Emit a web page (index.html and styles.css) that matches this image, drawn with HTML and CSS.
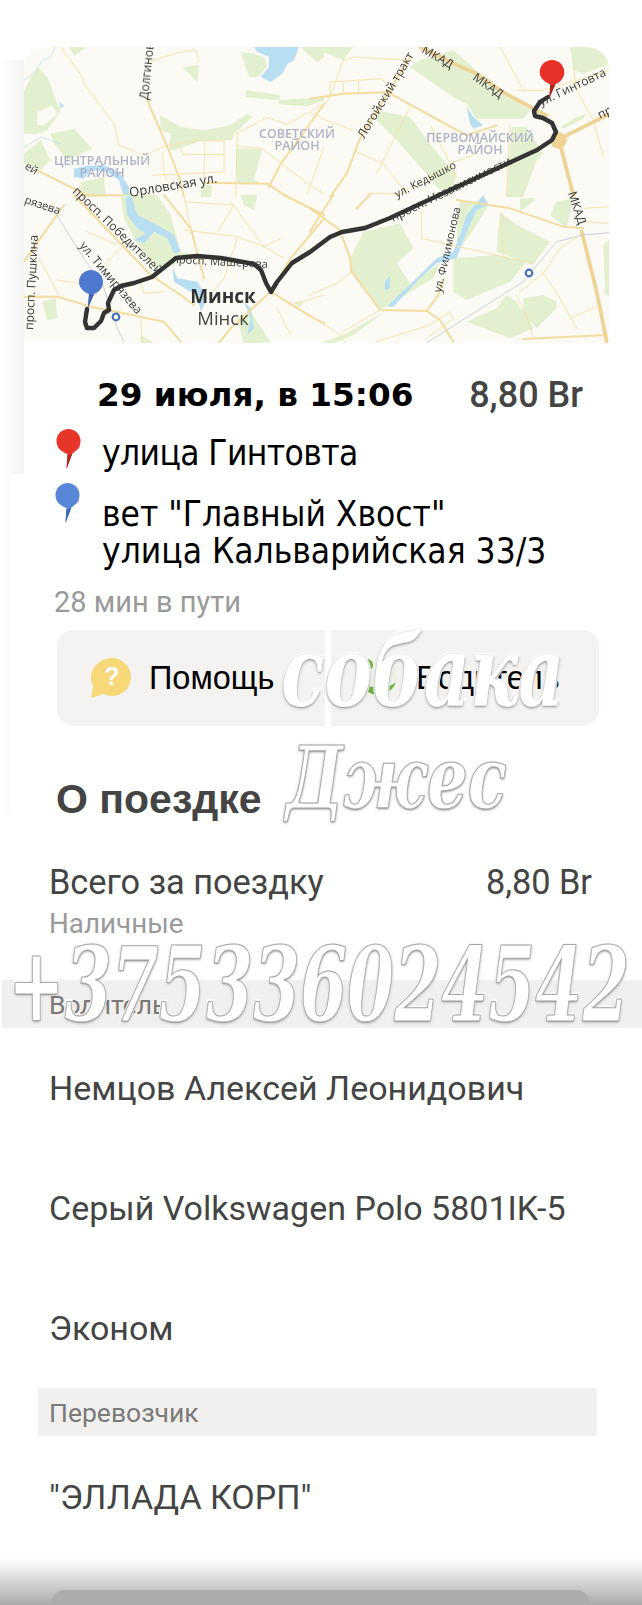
FILE: index.html
```html
<!DOCTYPE html>
<html lang="ru">
<head>
<meta charset="utf-8">
<title>О поездке</title>
<link rel="stylesheet" href="styles.css">
</head>
<body>
<div class="page">
  <section class="top">
    <svg class="map" viewBox="24 47 585 296" xmlns="http://www.w3.org/2000/svg">
      <defs><filter id="soft" x="-5%" y="-5%" width="110%" height="110%"><feGaussianBlur stdDeviation="0.4"/></filter></defs>
      <rect class="land" x="24" y="47" width="585" height="296"/>
      <g filter="url(#soft)">
        <g transform="translate(24 47) scale(.33333)">
          <g class="green">
            <path d="M0 130 L40 60 L70 90 L100 170 L110 190 L70 250 L40 260 L0 260Z"/>
            <path d="M80 260 L150 245 L205 305 L130 340 L90 290Z"/>
            <path d="M0 320 L50 280 L80 340 L50 370 L0 350Z"/>
            <path d="M475 60 L525 55 L520 105Z"/>
            <path d="M408 205 L470 240 L540 250 L620 235 L670 200 L685 210 L630 260 L625 280 L530 282 L450 310 L435 310 L440 260 L410 250Z"/>
            <path d="M690 20 L650 15 L675 90 L700 90 L730 60 L720 30Z"/>
            <path d="M665 130 L770 145 L765 160 L665 150Z"/>
            <path d="M765 160 L900 150 L900 160 L850 178 L765 172Z"/>
            <path d="M135 0 L190 0 L150 25Z"/>
            <path d="M830 0 L900 0 L900 30 L880 45 L850 20Z"/>
            <path d="M635 305 L715 305 L690 400 L715 410 L640 410Z"/>
            <path d="M170 405 L240 390 L245 450 L170 450Z"/>
            <path d="M530 415 L565 415 L560 450 L530 450Z"/>
          </g>
          <path class="land" d="M40 195 L85 175 L100 200 L60 235 L40 235Z"/>
          <g class="water">
            <path d="M690 0 L825 0 L810 40 L790 50 L775 80 L740 105 L710 90 L735 60 L735 30 L700 15Z"/>
            <path d="M150 365 Q200 350 250 358 L290 380 L315 420 L315 450 L300 450 L285 400 L250 375 L200 370 L180 395 L150 390Z"/>
            <path d="M105 165 L120 175 L110 185Z"/>
          </g>
          <path class="z-river" d="M95 0 L80 30 L55 40 L30 80 L0 100 M0 300 L50 270 L110 290"/>
          <path class="z-thin" d="M110 0 L175 90 L180 110 L270 230 L285 295 L360 325 L430 295 L530 280 L600 282 L600 375 M380 45 Q450 15 515 8 L525 45 M543 282 L540 400 M470 300 L475 322 L600 322 M385 385 L600 375 M415 320 L420 380 L430 400 M635 260 L730 212 L790 232 L900 170 M640 258 L635 450 M640 298 L715 305 L850 410 L900 440 M900 300 L850 440"/>
          <path class="z-mid" d="M370 160 L430 300 L465 390 L480 450 M40 370 L190 445 L320 445 M545 407 L730 410 L790 450 M900 170 L830 270 L770 350 L735 420"/>
        </g>
        <g transform="translate(24 195) scale(.33333)">
          <g class="green">
            <path d="M290 0 L400 0 L440 60 L470 170 L520 180 L480 190 L440 215 L400 225 L340 150 L300 70Z"/>
            <path d="M650 0 L700 0 L690 45 L660 30Z"/>
            <path d="M55 320 L95 310 L100 370 L70 375Z"/>
            <path d="M810 320 L840 320 L825 340Z"/>
            <path d="M640 370 L680 350 L740 440 L660 450Z"/>
            <path d="M350 420 L400 450 L350 450Z"/>
          </g>
          <g class="water">
            <path d="M305 10 L320 0 L340 60 L400 90 L450 120 L470 170 L450 175 L430 130 L390 110 L360 145 L330 135 L365 115 L340 100 L310 60Z"/>
            <path d="M445 215 L460 250 L520 260 L550 310 L530 350 L520 300 L490 285 L450 260Z"/>
            <path d="M660 320 L680 340 L690 400 L670 420 L680 370Z"/>
          </g>
          <path class="z-thin" d="M480 105 L640 125 L720 155 L780 190 M630 30 L580 110 M480 0 L500 100 M640 130 L600 250 L550 310 M45 190 L110 310 M100 255 L190 270 M190 110 L280 150 M240 210 L300 150 M350 265 L360 295 L420 290 M720 155 L770 130 M760 340 L800 420 M800 330 L900 300 M620 20 L720 155 M480 20 L630 30 M350 370 L355 450"/>
          <path class="z-mid" d="M150 0 L380 240 L470 300 L510 330 M120 30 L70 100 L0 200 M0 305 L100 305 L200 335 L300 355 L420 380 L470 440 M900 60 L780 0 M740 290 L800 190 L900 70 M740 290 L620 400 L580 450 M740 290 L870 370 L900 385 M420 0 L500 100 L540 250"/>
          <path class="z-rail" d="M0 20 L95 55 L160 160 L240 280 L280 400 L300 440"/>
        </g>
        <g transform="translate(310 47) scale(.33333)">
          <g class="green">
            <path d="M40 0 L130 0 L100 40 L40 15Z"/>
            <path d="M430 10 L500 70 L660 190 L640 215 L500 215 L470 170 L430 150 L300 60 L330 40Z"/>
            <path d="M200 190 L300 210 L360 290 L400 340 L440 380 L420 450 L380 420 L340 370 L260 280 L200 220Z"/>
            <path d="M605 240 L650 240 L700 320 L680 340 L640 450 L590 450Z"/>
            <path d="M780 0 L900 0 L900 50 L820 80 L790 70Z"/>
            <path d="M750 240 L800 210 L830 200 L820 215 L760 245Z"/>
          </g>
          <g class="water"><path d="M470 180 L490 210 L520 235 L490 245 L480 230Z"/></g>
          <path class="z-thin" d="M0 230 L60 150 L100 40 L130 30 L300 40 M60 105 L215 95 L250 140 M60 105 L60 145 M100 105 L100 140 M145 100 L145 140 M300 180 L200 380 M0 195 L50 220 L130 250 M130 310 L220 350 L290 440 M365 240 L420 350 L440 390 M420 350 L500 320 M600 230 L590 450 M620 130 L700 130 L900 70 M790 60 L800 130 L850 220 L880 330 M570 0 L640 130 M170 440 L270 440 L420 360"/>
          <path class="z-mid" d="M240 140 L350 200 L470 265 L560 235 M0 155 L100 140 L240 135 M300 30 L150 275 L110 380 L60 450"/>
          <path class="z-wide" d="M330 0 L430 50 L490 75 L570 130 L680 190 L710 205 M750 290 L790 445 M900 200 L780 260 L740 285"/>
          <circle class="junction" cx="745" cy="280" r="25"/>
        </g>
        <g transform="translate(310 195) scale(.33333)">
          <g class="green">
            <path d="M160 110 L270 85 L310 160 L260 205 L300 265 L390 205 L370 250 L210 345 L130 240 L120 190Z"/>
            <path d="M450 20 L530 20 L530 40 L480 120 L440 170 L440 80Z"/>
            <path d="M570 50 L620 90 L720 140 L670 210 L560 170Z"/>
            <path d="M430 190 L560 180 L650 200 L600 260 L470 315 L430 290Z"/>
            <path d="M630 10 L680 10 L630 50Z"/>
            <path d="M740 20 L790 10 L770 100 L720 60Z"/>
            <path d="M640 310 L700 300 L740 320 L740 340 L680 400 L640 360Z"/>
            <path d="M590 300 L620 320 L670 400 L600 430 L470 380 L560 340Z"/>
            <path d="M880 150 L900 130 L900 300 L885 300Z"/>
            <path d="M40 440 L100 420 L170 380 L225 350 L130 420 L60 450Z"/>
          </g>
          <g class="water">
            <path d="M520 0 L535 30 L500 45 L470 110 L440 190 L380 205 L330 250 L250 335 L230 335 L320 250 L380 190 L430 170 L450 120 L470 60Z"/>
            <path d="M225 260 L240 240 L240 280 L225 285Z"/>
          </g>
          <path class="z-thin" d="M335 50 L335 130 L580 185 L670 205 M575 60 L580 185 M630 290 L700 235 L750 310 L800 400 M620 300 L660 390 L670 430 M700 235 L750 160 L810 120 M210 345 L100 410 L90 430 M0 300 L80 265 L125 230 M0 360 L90 420 L110 450 M780 370 L860 335 M820 40 L900 35 M820 80 L900 85 M200 440 L360 390 L420 350 L430 370 L350 430"/>
          <path class="z-mid" d="M0 40 L90 105 L120 190 L125 230 L210 345 L350 348 L390 375 L430 440 M350 348 L385 300 L400 250 M440 15 L600 40 L760 95 L820 100 M70 0 L30 60 L0 110 M140 40 L180 0 M640 432 L890 420"/>
          <path class="z-wide" d="M815 110 L860 290 L890 440"/>
          <path class="z-rail" d="M340 450 L640 260 L740 140 L820 120 L900 113"/>
        </g>
      </g>
      <g class="labels">
        <text transform="translate(148 100) rotate(-84)">Долгинова</text>
        <text transform="translate(364 139) rotate(-59)">Логойский тракт</text>
        <text transform="translate(130 197) rotate(-9.500)" class="big">Орловская ул.</text>
        <text transform="translate(72 192) rotate(44)">просп. Победителей</text>
        <text transform="translate(79 246) rotate(50)">ул. Тимирязева</text>
        <text transform="translate(33 330) rotate(-87)">просп. Пушкина</text>
        <text transform="translate(397 198) rotate(-27)" class="small">ул. Кедышко</text>
        <text transform="translate(393 222) rotate(-26)">просп. Независимости</text>
        <text transform="translate(441 293) rotate(-77)" class="small">ул. Филимонова</text>
        <text transform="translate(172 263) rotate(3)" class="small">просп. Машерова</text>
        <text transform="translate(541 106) rotate(-25)">ул. Гинтовта</text>
        <text transform="translate(600 119) rotate(-25)">пр</text>
        <text transform="translate(24 203) rotate(18)" class="small">рязева</text>
        <text transform="translate(24 168) rotate(33)" class="small">ей</text>
        <text transform="translate(421 52) rotate(30)">МКАД</text>
        <text transform="translate(472 79) rotate(35)">МКАД</text>
        <text transform="translate(568 193) rotate(72)">МКАД</text>
        <text x="297" y="138" class="district">СОВЕТСКИЙ</text>
        <text x="297" y="150" class="district">РАЙОН</text>
        <text x="480" y="142" class="district">ПЕРВОМАЙСКИЙ</text>
        <text x="480" y="154" class="district">РАЙОН</text>
        <text x="102" y="165" class="district">ЦЕНТРАЛЬНЫЙ</text>
        <text x="102" y="177" class="district">РАЙОН</text>
        <text x="223" y="303" class="city">Минск</text>
        <text x="223" y="325" class="city-by">Мінск</text>
      </g>
      <circle class="metro" cx="116" cy="317" r="3.300"/>
      <circle class="metro" cx="529" cy="273" r="3.300"/>
      <path class="route" d="M87 309 L85 322 L87 328 L94 328 L101 321 L104 313 L109 310 L108 303 L114 290 L121 286 L134 283 L152 277 L176 258 L197 256 L221 258 L254 264 L261 270 L266 283 L271 292 L277 282 L292 263 L310 252 L330 237 L342 232 L365 228 L390 218 L435 197 L537 150 L552 140 L556 132 L552 123 L543 118 L535 116 L534 111 L540 102 L548 97"/>
      <path class="pin-head-blue" d="M91 270a12 12 0 0 1 12 12c0 6-4 10-9 12l-6 14 1-14c-5-2-10-6-10-12a12 12 0 0 1 12-12z"/>
      <path class="pin-tail-blue" d="M94 294l-6 14 1-14c2 .700 3 .700 5 0z"/>
      <path class="pin-head-red" d="M552 60a12.300 12.300 0 0 1 12.300 12.300c0 6-4 10-9 12l-6 14 1-14c-5-2-10.600-6-10.600-12A12.300 12.300 0 0 1 552 60z"/>
      <path class="pin-tail-red" d="M555.300 84.300l-6 14 1-14c2 .700 3 .700 5 0z"/>
    </svg>
    <div class="date-row">
      <span class="date">29 июля, в 15:06</span>
      <span class="price">8,80 Br</span>
    </div>
    <div class="addr addr-from">
      <svg class="pin" viewBox="0 0 24 40" xmlns="http://www.w3.org/2000/svg"><path fill="#e8352a" d="M0 12a12 12 0 0 1 24 0c0 7-5 10-8 12L10 40l1-15C5 23 0 19 0 12z"/><path fill="#a92a20" d="M24 16c-1 4-5 6-8 8L10 40l1-14c5 0 10-5 13-10z"/></svg>
      <span class="addr-text">улица Гинтовта</span>
    </div>
  </section>
  <section class="mid">
    <div class="addr addr-to">
      <svg class="pin" viewBox="0 0 24 40" xmlns="http://www.w3.org/2000/svg"><path fill="#5a86d8" d="M0 12a12 12 0 0 1 24 0c0 7-5 10-8 12L10 40l1-15C5 23 0 19 0 12z"/><path fill="#3f69b5" d="M24 16c-1 4-5 6-8 8L10 40l1-14c5 0 10-5 13-10z"/></svg>
      <span class="addr-text">вет "Главный Хвост"<br>улица Кальварийская 33/3</span>
    </div>
    <div class="duration">28 мин в пути</div>
    <div class="actions">
      <div class="action">
        <svg class="action-icon" viewBox="0 0 40 40" xmlns="http://www.w3.org/2000/svg"><path fill="#f8d97a" d="M21 0c11 0 19 9 19 19s-8 19-19 19c-3 0-6-.700-8.500-2L0 40l2-12C.5 25 0 22 0 19 0 9 10 0 21 0z"/><text class="qmark" x="21" y="27" text-anchor="middle">?</text></svg>
        <span>Помощь</span>
      </div>
      <div class="action action-driver">
        <svg class="action-icon" viewBox="0 0 40 40" xmlns="http://www.w3.org/2000/svg"><circle cx="20" cy="20" r="19" fill="#eef3e4"/><path d="M2 24a19 19 0 0 0 36 0c-6 7-28 7-36 0z" fill="#6db33f"/><circle cx="9" cy="7" r="6" fill="#6db33f"/></svg>
        <span>Водитель</span>
      </div>
    </div>
    <h2 class="heading">О поездке</h2>
  </section>
  <section class="details">
    <div class="total-row">
      <span>Всего за поездку</span>
      <span>8,80 Br</span>
    </div>
    <div class="payment">Наличные</div>
    <div class="band band-wide">Водитель</div>
    <div class="row">Немцов Алексей Леонидович</div>
    <div class="row">Серый Volkswagen Polo 5801IK-5</div>
    <div class="row">Эконом</div>
    <div class="band band-inset">Перевозчик</div>
    <div class="row row-last">"ЭЛЛАДА КОРП"</div>
  </section>
  <footer class="bottom"><div class="bottom-button"></div></footer>
  <div class="stamp stamp-dog">собака</div>
  <div class="stamp stamp-inline stamp-name" data-text="Джес">Джес</div>
  <div class="stamp stamp-inline stamp-phone" data-text="+375336024542">+375336024542</div>
</div>
</body>
</html>
```
FILE: styles.css
```css
* { box-sizing: border-box; }
html, body { margin: 0; padding: 0; background: #fff; }
body { font-family: Roboto, "Liberation Sans", sans-serif; }
.page { position: relative; width: 642px; height: 1605px; overflow: hidden; background: #fff; }

.top { height: 474px; padding: 47px 0 0 24px; background: linear-gradient(to right, #fff 0, #f3f3f3 24px, #fff 24px) no-repeat 0 60px; }
.map { display: block; width: 585px; height: 296px; border-radius: 22px 22px 0 0; }
.land { fill: #fcfaf4; }
.green path { fill: #e2f0d0; }
.water path { fill: #b8def1; }
.z-thin, .z-mid, .z-wide, .z-rail, .z-river { fill: none; stroke-linejoin: round; stroke-linecap: round; }
.z-thin { stroke: #f6e2ac; stroke-width: 3; }
.z-mid { stroke: #f4dc9f; stroke-width: 6; }
.z-wide { stroke: #eed395; stroke-width: 11; }
.z-rail { stroke: #c2c9d4; stroke-width: 2.500; }
.z-river { stroke: #c3e0e6; stroke-width: 2.500; }
.junction { fill: #eed395; }
.labels text { font: 400 12px "Open Sans", "Noto Sans", sans-serif; fill: #3a3a3a; }
.labels .small { font-size: 11px; }
.labels .big { font-size: 13px; }
.labels .district { font: 600 12.500px "Open Sans", sans-serif; fill: #aeb2c9; text-anchor: middle; }
.labels .city { font: 700 19px "Open Sans", sans-serif; fill: #333; text-anchor: middle; }
.labels .city-by { font: 400 18.500px "Open Sans", sans-serif; fill: #444; text-anchor: middle; }
.metro { fill: #fff; stroke: #4470b5; stroke-width: 2.200; }
.route { fill: none; stroke: #333; stroke-width: 4.400; stroke-linejoin: round; stroke-linecap: round; }
.pin-head-blue { fill: #4f78cf; }
.pin-tail-blue { fill: #3b62aa; }
.pin-head-red { fill: #e8302a; }
.pin-tail-red { fill: #a8281c; }

.date-row { display: flex; justify-content: space-between; align-items: center; height: 42px; margin-top: 31px; padding: 0 59px 0 73px; }
.date { font: 700 32.700px "DejaVu Sans", sans-serif; color: #000; }
.price { font: 500 36px Roboto, sans-serif; color: #444; }

.addr { display: flex; align-items: flex-start; }
.pin { width: 25px; height: 40px; flex: none; }
.addr-text { font: 400 35px "DejaVu Sans", sans-serif; font-stretch: condensed; color: #000; margin-left: 21px; white-space: nowrap; }
.addr-from { margin: 13px 0 0 32px; height: 45px; }
.addr-from .addr-text { line-height: 49px; letter-spacing: -.6px; }
.addr-to { padding: 9px 0 0 55px; height: 104px; }
.addr-to .addr-text { margin: 13px 0 0 22px; line-height: 37px; }

.mid { height: 341px; background: linear-gradient(to right, #fff 0, #fbfbfb 10px, #fff 10px); }
.duration { margin: 9px 0 0 54px; font-size: 29px; line-height: 30px; color: #9a9a9a; }
.actions { display: grid; grid-template-columns: 268px 268px; gap: 6px; margin: 13px 0 0 57px; width: 542px; height: 96px; }
.action { display: flex; align-items: center; background: #f4f3f1; padding-left: 34px; font: 400 32.500px "Liberation Sans", sans-serif; color: #000; border-radius: 16px 0 0 16px; }
.action-driver { border-radius: 0 16px 16px 0; padding-left: 27px; }
.action-icon { width: 40px; height: 40px; margin-right: 18px; flex: none; }
.qmark { font: 700 25px "Liberation Sans", sans-serif; fill: #fff; }
.heading { margin: 50px 0 0 56px; font: 700 41px/46px "Liberation Sans", sans-serif; color: #444; }

.details { color: #444; font-size: 34px; }
.total-row { display: flex; justify-content: space-between; margin-top: 40px; padding: 0 50px 0 49px; height: 54px; align-items: center; font-size: 34.300px; }
.payment { padding-left: 49px; font-size: 27.800px; line-height: 30px; color: #9a9a9a; }
.band { height: 48px; display: flex; align-items: center; font-size: 26.500px; color: #7a7a7a; background: #f1f0ee; }
.band-wide { margin: 41px 0 0 2px; padding-left: 47px; }
.band-inset { margin: 0 45px 0 38px; padding-left: 11px; }
.row { height: 120px; display: flex; align-items: center; padding-left: 49px; }
.row-last { height: 122px; }

.bottom { height: 47px; padding: 32px 52px 0 51px; background: linear-gradient(to bottom, #fff 0, #f0f0f0 20%, #aaa 100%); }
.bottom-button { height: 40px; border-radius: 14px 14px 0 0; background: #adacaa; }

.stamp { position: absolute; font-family: "DejaVu Serif", "Liberation Serif", serif; font-stretch: condensed; font-weight: 700; font-style: italic; color: #fff; -webkit-text-stroke: 4px #fff; paint-order: stroke fill; text-shadow: 0 1px 3px rgba(0,0,0,.55); white-space: nowrap; line-height: 1; transform-origin: 0 0; }
.stamp-inline::after { content: attr(data-text); position: absolute; left: 0; top: 0; -webkit-text-stroke: 1px #a6a6a6; paint-order: normal; text-shadow: none; }
.stamp-dog { left: 281px; top: 623px; font-size: 98px; transform: scaleX(.81); }
.stamp-name { left: 286px; top: 735px; font-size: 86px; transform: scaleX(.83); }
.stamp-phone { left: 8px; top: 933px; font-size: 103px; transform: scaleX(.73); }
```
